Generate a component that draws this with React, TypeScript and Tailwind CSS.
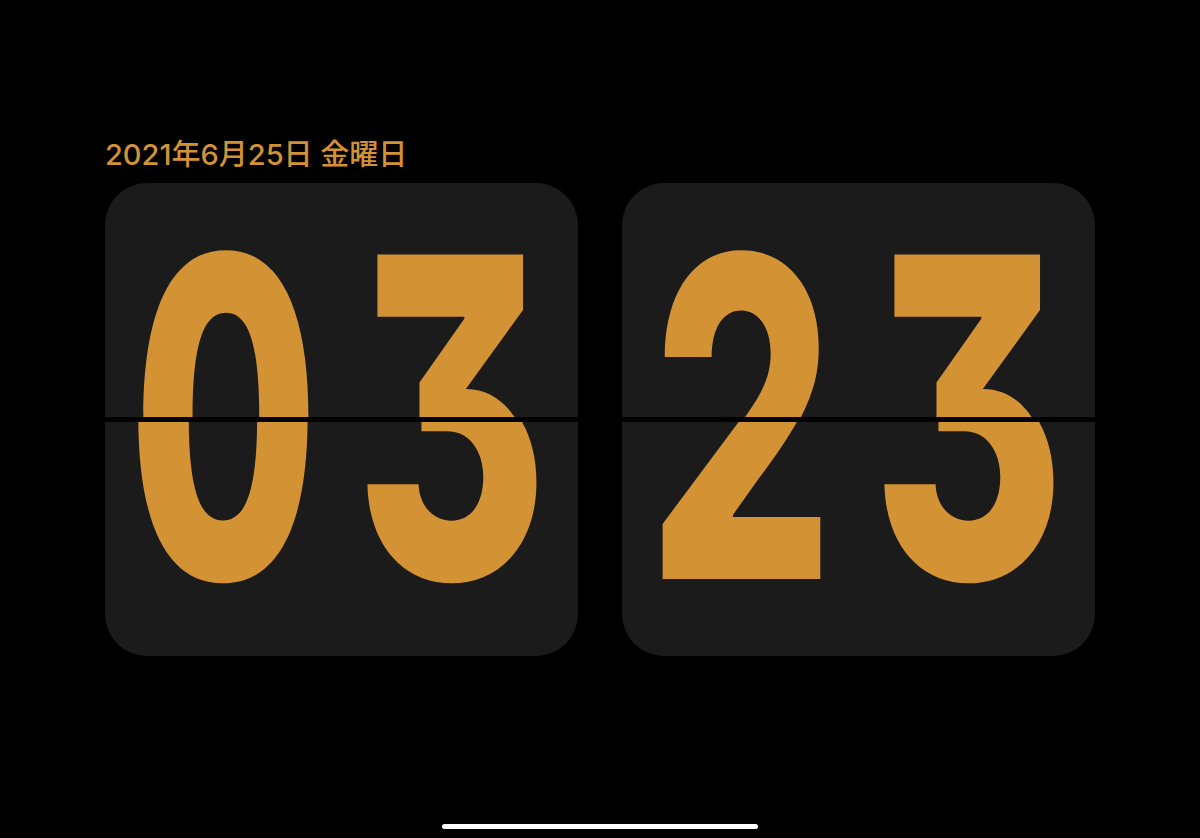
import React from 'react';

const digitFont = {
  fontFamily: 'Inter, "DejaVu Sans", sans-serif',
};

function Digits({ value }: { value: string }) {
  return (
    <div className="flex h-[473px] w-[473px] items-center justify-center pr-[8px] pb-[5px]">
      {value.split('').map((d, i) => (
        <span
          key={i}
          className="flex w-[230px] justify-center text-[446px] font-extrabold leading-none text-[#d39234] [font-feature-settings:'cv09','tnum']"
          style={digitFont}
        >
          <span className="inline-block scale-x-[0.66]">{d}</span>
        </span>
      ))}
    </div>
  );
}

function FlipCard({ value }: { value: string }) {
  return (
    <div className="flex h-[473px] w-[473px] flex-col overflow-hidden rounded-[42px] bg-[#1b1b1b]">
      {/* top half, a little narrower than the bottom one */}
      <div className="h-[234px] overflow-hidden">
        <div className="scale-x-[0.975]">
          <Digits value={value} />
        </div>
      </div>
      <div className="h-[5px] bg-black" />
      <div className="h-[234px] overflow-hidden">
        <div className="-mt-[239px]">
          <Digits value={value} />
        </div>
      </div>
    </div>
  );
}

export default function App() {
  return (
    <div className="flex h-[838px] w-full flex-col items-center bg-black">
      <div className="mt-[137px] flex w-[990px] flex-col gap-[10px]">
        <div
          className="text-[29px] font-medium leading-[36px] text-[#d39234]"
          style={{ fontFamily: 'Inter, "Noto Sans CJK JP", sans-serif' }}
        >
          2021年6月25日 金曜日
        </div>
        <div className="flex gap-[44px]">
          <FlipCard value="03" />
          <FlipCard value="23" />
        </div>
      </div>
      <div className="mt-auto mb-[9px] h-[5px] w-[316px] rounded-full bg-white" />
    </div>
  );
}
